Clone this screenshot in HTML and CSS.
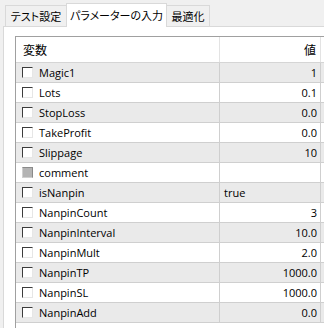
FILE: index.html
```html
<!DOCTYPE html>
<html lang="ja">
<head>
<meta charset="utf-8">
<link rel="stylesheet" href="styles.css">
</head>
<body>
<div class="tabs">
  <div class="tab t1">テスト設定</div>
  <div class="tab t2 active">パラメーターの入力</div>
  <div class="tab t3">最適化</div>
</div>
<div class="panel">
  <div class="table">
    <div class="row head">
      <div class="c1">変数</div>
      <div class="c2">値</div>
      <div class="c3"></div>
    </div>
    <div class="row alt"><div class="c1"><span class="cb"></span>Magic1</div><div class="c2">1</div><div class="c3"></div></div>
    <div class="row"><div class="c1"><span class="cb"></span>Lots</div><div class="c2">0.1</div><div class="c3"></div></div>
    <div class="row alt"><div class="c1"><span class="cb"></span>StopLoss</div><div class="c2">0.0</div><div class="c3"></div></div>
    <div class="row"><div class="c1"><span class="cb"></span>TakeProfit</div><div class="c2">0.0</div><div class="c3"></div></div>
    <div class="row alt"><div class="c1"><span class="cb"></span>Slippage</div><div class="c2">10</div><div class="c3"></div></div>
    <div class="row"><div class="c1"><span class="cb dis"></span>comment</div><div class="c2"></div><div class="c3"></div></div>
    <div class="row alt"><div class="c1"><span class="cb"></span>isNanpin</div><div class="c2 left">true</div><div class="c3"></div></div>
    <div class="row"><div class="c1"><span class="cb"></span>NanpinCount</div><div class="c2">3</div><div class="c3"></div></div>
    <div class="row alt"><div class="c1"><span class="cb"></span>NanpinInterval</div><div class="c2">10.0</div><div class="c3"></div></div>
    <div class="row"><div class="c1"><span class="cb"></span>NanpinMult</div><div class="c2">2.0</div><div class="c3"></div></div>
    <div class="row alt"><div class="c1"><span class="cb"></span>NanpinTP</div><div class="c2">1000.0</div><div class="c3"></div></div>
    <div class="row"><div class="c1"><span class="cb"></span>NanpinSL</div><div class="c2">1000.0</div><div class="c3"></div></div>
    <div class="row alt"><div class="c1"><span class="cb"></span>NanpinAdd</div><div class="c2">0.0</div><div class="c3"></div></div>
  </div>
</div>
</body>
</html>
```
FILE: styles.css
```css
* { box-sizing: border-box; }
html, body {
  margin: 0;
  padding: 0;
  width: 324px;
  height: 328px;
  overflow: hidden;
  background: #f0f0f0;
}
body {
  padding-left: 3px;
  font-family: "Open Sans", "Noto Sans CJK JP", sans-serif;
  font-size: 11px;
  color: #000;
}
.tabs {
  display: flex;
  align-items: flex-end;
  height: 26px;
  padding-left: 2px;
  position: relative;
  z-index: 1;
}
.tab {
  font-family: "Noto Sans CJK JP", sans-serif;
  font-size: 11px;
  font-feature-settings: "palt";
  height: 21px;
  border: 1px solid #d9d9d9;
  border-bottom: none;
  background: #f0f0f0;
  display: flex;
  align-items: center;
  justify-content: center;
  color: #000;
}
.t1 { width: 61px; border-right: none; }
.t2 { width: 101px; }
.t3 { width: 43px; border-left: none; }
.tab.active {
  height: 24px;
  margin-bottom: -1px;
  background: #fff;
  padding-bottom: 2px;
}
.panel {
  width: 321px;
  height: 302px;
  overflow: hidden;
  background: #fff;
  border-top: 1px solid #d9d9d9;
  border-left: 1px solid #d9d9d9;
  padding: 9px 0 0 11px;
}
.table {
  width: 100%;
  height: 100%;
  overflow: hidden;
  border-top: 1px solid #a0a0a0;
  border-left: 1px solid #a0a0a0;
}
.row {
  display: grid;
  grid-template-columns: 204px 101px 1fr;
  height: 20px;
  border-bottom: 1px solid #cfcfcf;
  align-items: stretch;
}
.row > div {
  display: flex;
  align-items: center;
  border-right: 1px solid #cfcfcf;
  white-space: nowrap;
  overflow: hidden;
}
.row > .c3 { border-right: none; }
.row.head {
  height: 26px;
  border-bottom: 1px solid #d5d5d5;
  font-family: "Noto Sans CJK JP", sans-serif;
  font-size: 12px;
}
.row.head > div { border-right-color: #e3e3e3; }
.row.alt { background: #eaeaea; }
.c1 { padding-left: 6px; }
.head .c1 { padding-left: 7px; }
.c2 { justify-content: flex-end; padding-right: 3px; }
.head .c2 { padding-right: 4px; }
.c2.left { justify-content: flex-start; padding-left: 4px; }
.cb {
  width: 11px;
  height: 11px;
  margin-right: 6px;
  flex: none;
  background: #fff;
  border-top: 1px solid #3c3c3c;
  border-left: 1px solid #3c3c3c;
  border-right: 1px solid #e6e6e6;
  border-bottom: 1px solid #e6e6e6;
}
.cb.dis {
  background: #b4b4b4;
  border-color: #8a8a8a #8a8a8a #d0d0d0 #d0d0d0;
}
```
